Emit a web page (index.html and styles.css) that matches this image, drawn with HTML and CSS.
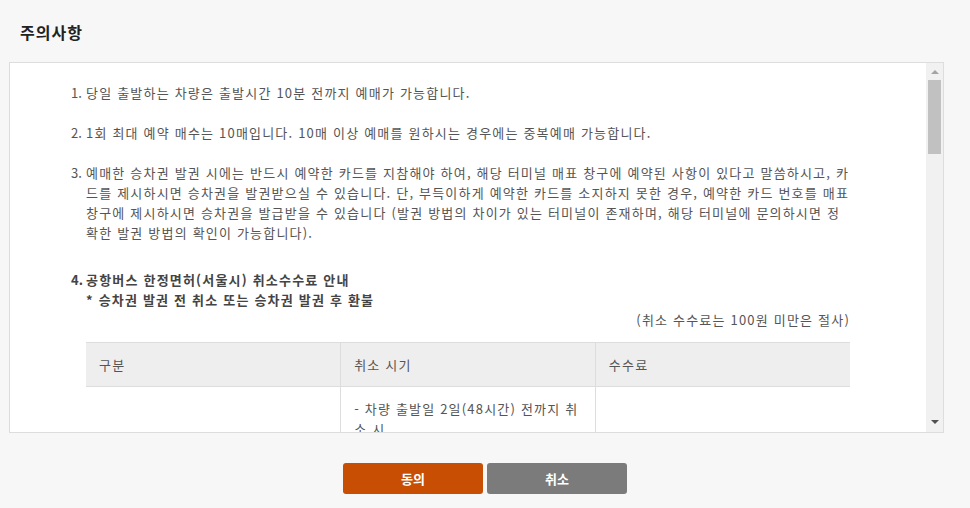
FILE: index.html
```html
<!DOCTYPE html>
<html lang="ko">
<head>
  <meta charset="UTF-8">
  <meta name="viewport" content="width=device-width, initial-scale=1.0">
  <title>주의사항</title>
  <link rel="stylesheet" href="styles.css">
</head>
<body>
  <div class="popup">
    <h2 class="popup-title">주의사항</h2>

    <div class="notice-box">
      <div class="notice-scroll">
        <ul class="notice-list">
          <li><span class="num">1.</span><p>당일 출발하는 차량은 출발시간 10분 전까지 예매가 가능합니다.</p></li>
          <li><span class="num">2.</span><p>1회 최대 예약 매수는 10매입니다. 10매 이상 예매를 원하시는 경우에는 중복예매 가능합니다.</p></li>
          <li><span class="num">3.</span><p>예매한 승차권 발권 시에는 반드시 예약한 카드를 지참해야 하여, 해당 터미널 매표 창구에 예약된 사항이 있다고 말씀하시고, 카드를 제시하시면 승차권을 발권받으실 수 있습니다. 단, 부득이하게 예약한 카드를 소지하지 못한 경우, 예약한 카드 번호를 매표 창구에 제시하시면 승차권을 발급받을 수 있습니다 (발권 방법의 차이가 있는 터미널이 존재하며, 해당 터미널에 문의하시면 정확한 발권 방법의 확인이 가능합니다).</p></li>
          <li class="strong">
            <span class="num">4.</span>
            <div class="item-body">
              <p>공항버스 한정면허(서울시) 취소수수료 안내</p>
              <p>* 승차권 발권 전 취소 또는 승차권 발권 후 환불</p>
              <p class="fee-note">(취소 수수료는 100원 미만은 절사)</p>
              <table class="fee-table">
                <thead>
                  <tr><th>구분</th><th>취소 시기</th><th>수수료</th></tr>
                </thead>
                <tbody>
                  <tr><td></td><td>- 차량 출발일 2일(48시간) 전까지 취소 시</td><td></td></tr>
                </tbody>
              </table>
            </div>
          </li>
        </ul>
      </div>

      <!-- scrollbar -->
      <div class="scrollbar">
        <span class="arrow up"></span>
        <div class="track"><div class="thumb"></div></div>
        <span class="arrow down"></span>
      </div>
    </div>

    <div class="btn-area">
      <button class="btn agree">동의</button>
      <button class="btn cancel">취소</button>
    </div>
  </div>
</body>
</html>
```

FILE: styles.css
```css
* {
  box-sizing: border-box;
}
body {
  margin: 0;
  background: #f7f7f7;
  color: #555;
  font-family: "Noto Sans CJK KR", "Noto Sans", sans-serif;
  font-size: 13px;
}
.popup {
  padding: 0 26px 0 9px;
}
.popup-title {
  margin: 0;
  padding: 21px 0 0 11px;
  height: 62px;
  font-size: 16px;
  font-weight: bold;
  letter-spacing: 1px;
  color: #222;
  line-height: 22px;
}
.notice-box {
  display: flex;
  height: 371px;
  background: #fff;
  border: 1px solid #ddd;
}
.notice-scroll {
  flex: 1;
  overflow: hidden;
  padding: 20px 76px 0 61px;
  letter-spacing: 1.2px;
  word-break: break-all;
}
.notice-list {
  list-style: none;
  margin: 0;
  padding: 0;
}
.notice-list li {
  display: flex;
  line-height: 20px;
  margin-bottom: 20px;
}
.notice-list li.strong {
  margin-top: 27px;
}
.notice-list p {
  margin: 0;
}
.num {
  flex: none;
  width: 15px;
  letter-spacing: 0;
}
.notice-list p,
.item-body {
  flex: 1;
}
.strong .num,
.strong p {
  font-weight: bold;
  color: #444;
}
.strong p.fee-note {
  font-weight: normal;
  color: #555;
  text-align: right;
}
.fee-table {
  width: 100%;
  margin-top: 12px;
  border-collapse: collapse;
  table-layout: fixed;
}
.fee-table th,
.fee-table td {
  border: 1px solid #ddd;
  text-align: left;
  vertical-align: top;
  padding: 0 13px;
}
.fee-table th:first-child,
.fee-table td:first-child {
  border-left: none;
}
.fee-table th:last-child,
.fee-table td:last-child {
  border-right: none;
}
.fee-table th {
  background: #eee;
  font-weight: normal;
  height: 44px;
  vertical-align: middle;
  color: #555;
}
.fee-table td {
  padding-top: 12px;
  padding-bottom: 12px;
  line-height: 20px;
}

/* scrollbar */
.scrollbar {
  flex: none;
  width: 17px;
  background: #f1f1f1;
  display: flex;
  flex-direction: column;
  align-items: center;
}
.arrow {
  width: 0;
  height: 0;
  border-left: 4px solid transparent;
  border-right: 4px solid transparent;
}
.arrow.up {
  margin-top: 7px;
  border-bottom: 4px solid #a3a3a3;
}
.arrow.down {
  margin-bottom: 8px;
  border-top: 4px solid #505050;
}
.track {
  flex: 1;
  width: 100%;
  padding: 6px 2px 0;
}
.thumb {
  height: 74px;
  background: #c1c1c1;
}

/* buttons */
.btn-area {
  display: flex;
  justify-content: center;
  gap: 4px;
  padding-top: 30px;
  margin-right: -17px;
}
.btn {
  width: 140px;
  height: 31px;
  border: none;
  border-radius: 3px;
  color: #fff;
  font-family: inherit;
  font-size: 13px;
  font-weight: bold;
  cursor: pointer;
}
.agree {
  background: #c84e04;
}
.cancel {
  background: #7b7b7b;
}
```
